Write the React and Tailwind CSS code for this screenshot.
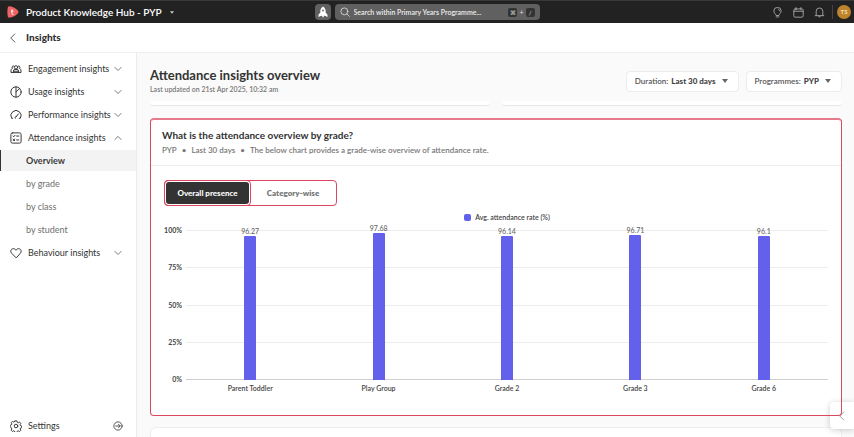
import React from "react";

const nav = [
  { label: "Engagement insights", icon: "people" },
  { label: "Usage insights", icon: "pie" },
  { label: "Performance insights", icon: "gauge" },
  { label: "Attendance insights", icon: "list", open: true, children: ["Overview", "by grade", "by class", "by student"] },
  { label: "Behaviour insights", icon: "heart" },
];

const grades = [
  { name: "Parent Toddler", value: 96.27 },
  { name: "Play Group", value: 97.68 },
  { name: "Grade 2", value: 96.14 },
  { name: "Grade 3", value: 96.71 },
  { name: "Grade 6", value: 96.1 },
];

const paths = {
  people: (
    <>
      <circle cx="8" cy="5.8" r="2.2" />
      <path d="M4.6 12.600v-1.800a2.200 2.200 0 0 1 2.200-2.200h2.400a2.200 2.200 0 0 1 2.200 2.200v1.800M5 4a1.700 1.700 0 0 0-1.500 3C2 7.600 1.300 9 1.300 10.600v2h13.400v-2c0-1.600-.7-3-2.200-3.600A1.700 1.700 0 0 0 11 4M4.600 11h6.800" />
    </>
  ),
  pie: (
    <>
      <circle cx="8" cy="8" r="6.9" />
      <path d="M8 1.2v13.6M8 8l4.8-4.9" />
    </>
  ),
  gauge: <path d="M3.600 12.400H2.200a6.800 6.800 0 1 1 11.600 0h-1.400M8.600 9.800l2.600-3.300M7 12.400a1.700 1.700 0 0 1 1.600-2.600" />,
  list: (
    <>
      <rect x="1.2" y="1.2" width="13.6" height="13.6" rx="2" />
      <path d="M4 5.4l1 1 1.7-2M8.8 5.4h3M4.2 9.4l2 2.2M6.2 9.4l-2 2.2M8.8 10.6h3" />
    </>
  ),
  heart: <path d="M8 14.2 2.3 8.5C-.2 5.8 1.3 2.2 4.5 2.2c1.7 0 2.8.9 3.5 2.1.7-1.2 1.8-2.1 3.5-2.1 3.2 0 4.7 3.6 2.2 6.3z" />,
  gear: (
    <>
      <path d="M6.8 1.2h2.4l.5 1.9 1.3.6 1.8-.9 1.6 1.700-.9 1.700.5 1.300 1.800.6v2l-1.800.6-.5 1.300.9 1.700-1.600 1.600-1.800-.9-1.300.6-.5 1.800H6.800l-.6-1.800-1.200-.6-1.800.9-1.600-1.600.9-1.700-.6-1.300L.3 9.100v-2l1.600-.6.6-1.300-.9-1.700 1.600-1.700 1.800.9 1.200-.6z" />
      <circle cx="8" cy="8" r="2.4" />
    </>
  ),
  exit: (
    <>
      <circle cx="8" cy="8" r="6.6" />
      <path d="M4.4 8h7M8.8 5.3 11.5 8l-2.7 2.7" />
    </>
  ),
  down: <path d="m1.800 4.800 6.200 6.200 6.200-6.200" />,
  up: <path d="m1.800 11 6.200-6.200 6.200 6.200" />,
  left: <path d="M10.800 1.600 4.400 8l6.400 6.400" />,
  search: (
    <>
      <circle cx="7" cy="7" r="5.6" />
      <path d="m11 11 4 4" />
    </>
  ),
  bulb: (
    <path d="M5.8 11.8C5.5 9.8 2.7 8.9 2.7 5.8a5.3 5.3 0 0 1 10.6 0c0 3.1-2.8 4-3.1 6zM6 14.4h4M9 3.2c1.4.3 2 1.200 2.100 2.400" />
  ),
  calendar: (
    <>
      <rect x="1.2" y="2.8" width="13.6" height="12" rx="2" />
      <path d="M1.2 6.2h13.6M4.5.8v3.4M11.5.8v3.4" />
    </>
  ),
  bell: <path d="M1.8 12.6h12.4M3.2 12.4V6.2a4.8 4.8 0 0 1 9.6 0v6.2M6.4 13.2a1.7 1.7 0 0 0 3.2 0" />,
};

function Icon({ name, className = "size-3" }) {
  return (
    <svg viewBox="0 0 16 16" className={`shrink-0 ${className}`} fill="none" stroke="currentColor" strokeWidth="1.3" strokeLinecap="round" strokeLinejoin="round" aria-hidden="true">
      {paths[name]}
    </svg>
  );
}

function Caret({ className = "h-1 w-1.5" }) {
  return (
    <svg viewBox="0 0 6 4" className={`shrink-0 ${className}`} fill="currentColor" aria-hidden="true">
      <path d="M0 0h6L3 4z" />
    </svg>
  );
}

function TopBar() {
  return (
    <header className="flex h-[23px] shrink-0 items-center border-t border-[#393939] bg-[#222] text-white">
      <div className="flex flex-1 items-center pl-[7px]">
        <svg viewBox="0 0 24 24" className="size-3" aria-hidden="true">
          <path d="M3 1C8-1 23 7 23 12S8 25 3 23C0 22 0 2 3 1z" fill="#ee6265" />
          <path d="M10 7v8c0 2 1 2 3 2M8 10h5" fill="none" stroke="#fff" strokeWidth="2" />
        </svg>
        <button type="button" className="flex items-center gap-2 pl-[7px] text-[10px] font-semibold">
          Product Knowledge Hub - PYP
          <Caret className="h-[3px] w-1 text-[#ccc]" />
        </button>
      </div>
      <button type="button" aria-label="Launch" className="mr-1 flex size-4 items-center justify-center rounded bg-[#606060]">
        <svg viewBox="0 0 16 16" className="size-3" fill="#fff" aria-hidden="true">
          <path d="M8 .5c3 2 4 4.700 3.500 8l2.500 3v3l-3.500-1.500H9.500L8 15.500 6.500 13h-1L2 14.500v-3l2.500-3C4 5.200 5 2.500 8 .5z" />
          <circle cx="8" cy="6" r="1.200" fill="#606060" />
        </svg>
      </button>
      <label className="mr-1 flex h-4 w-[205px] items-center rounded bg-[#606060] pr-[5px] pl-[5px]">
        <Icon name="search" className="size-2.5 text-[#ddd]" />
        <input
          type="text"
          aria-label="Search"
          placeholder="Search within Primary Years Programme..."
          className="min-w-0 flex-1 bg-transparent pl-1 text-[7px] font-semibold text-white outline-none placeholder:text-[#eee]"
        />
        <kbd className="flex h-[9px] w-[9px] items-center justify-center rounded-xs bg-[#333] font-[DejaVu_Sans] text-[6px] text-[#ddd]">⌘</kbd>
        <span className="px-0.5 text-[7px] text-[#ddd]">+</span>
        <kbd className="flex h-[9px] w-[9px] items-center justify-center rounded-xs bg-[#333] font-[Lato] text-[6px] text-[#ddd]">/</kbd>
      </label>
      <div className="flex flex-1 items-center justify-end pr-[3px] text-[#aaa]">
        <button type="button" aria-label="Tips"><Icon name="bulb" className="size-[11px]" /></button>
        <button type="button" aria-label="Calendar" className="ml-2.5"><Icon name="calendar" className="size-[11px]" /></button>
        <button type="button" aria-label="Notifications" className="ml-2.5"><Icon name="bell" className="size-[11px]" /></button>
        <span className="ml-[7px] h-3.5 w-px bg-[#444]" />
        <button type="button" className="ml-1 size-3.5 rounded-full bg-[#bd842c] text-center text-[6px] leading-[14px] font-bold text-[#f3dfba]">TS</button>
      </div>
    </header>
  );
}

function Sidebar() {
  return (
    <nav className="flex w-[137px] shrink-0 flex-col border-r border-[#ececec] bg-white pt-1 text-[9px] text-[#333]">
      {nav.map((item) => (
        <div key={item.label}>
          <button type="button" className="flex h-[23px] w-full items-center pr-3.5 pl-2.5">
            <Icon name={item.icon} />
            <span className="flex-1 pl-1.5 text-left whitespace-nowrap">{item.label}</span>
            <Icon name={item.open ? "up" : "down"} className="size-2" />
          </button>
          {item.children?.map((child, i) => (
            <a
              key={child}
              href="#"
              className={
                i === 0
                  ? "my-px flex h-[21px] items-center border-l border-[#333] bg-[#f3f3f3] pl-[25px] text-[9px] font-bold text-[#3a3a3a]"
                  : "flex h-[23px] items-center pl-[26px] text-[#707070]"
              }
            >
              {child}
            </a>
          ))}
        </div>
      ))}
      <button type="button" className="mt-auto flex h-[23px] w-full items-center pr-[13px] pl-2.5">
        <Icon name="gear" />
        <span className="flex-1 pl-1.5 text-left">Settings</span>
        <Icon name="exit" className="size-2.5" />
      </button>
    </nav>
  );
}

function Filter({ label, value }) {
  return (
    <button type="button" className="flex h-[21px] items-center rounded border border-[#ececec] bg-white px-2 text-[8px] font-semibold text-[#555]">
      {label}:<span className="pl-[3px] font-black text-[#444]">{value}</span>
      <Caret className="mr-0.5 ml-1.5 h-1 w-1.5 text-[#666]" />
    </button>
  );
}

function Chart() {
  return (
    <div className="pr-3.5 pl-3 pt-1.5 text-[#444]">
      <div className="flex h-[11px] items-center justify-center gap-1 pl-6 text-[7px] font-semibold">
        <span className="size-[7px] rounded-xs bg-[#6361ec]" />
        Avg. attendance rate (%)
      </div>
      <div className="flex gap-1 pt-[7px]">
        <div className="-my-1 flex w-5 flex-col justify-between text-right text-[7px] leading-[9px] font-bold">
          {["100%", "75%", "50%", "25%", "0%"].map((tick) => (
            <span key={tick}>{tick}</span>
          ))}
        </div>
        <div className="relative h-[150px] flex-1">
          <div className="absolute inset-0 flex flex-col justify-between">
            <i className="h-px bg-[#ececec]" />
            <i className="h-px bg-[#ececec]" />
            <i className="h-px bg-[#ececec]" />
            <i className="h-px bg-[#ececec]" />
            <i className="h-px bg-[#cfcfcf]" />
          </div>
          <div className="relative grid h-full grid-cols-5">
            {grades.map((grade) => (
              <div key={grade.name} className="flex flex-col items-center justify-end">
                <span className="text-[7px] leading-[9px] font-medium text-[#666]">{grade.value}</span>
                <div className="w-3 shrink-0 rounded-t-[1px] bg-[#6361ec]" style={{ height: `${grade.value}%` }} />
              </div>
            ))}
          </div>
        </div>
      </div>
      <div className="grid grid-cols-5 pt-1 pl-6 text-center text-[7px] leading-[9px] font-semibold">
        {grades.map((grade) => (
          <span key={grade.name}>{grade.name}</span>
        ))}
      </div>
    </div>
  );
}

export default function App() {
  return (
    <div className="relative flex h-screen flex-col overflow-hidden bg-white font-[Lato,'Open_Sans',sans-serif]">
      <TopBar />
      <div className="flex h-[30px] shrink-0 items-center gap-2 border-b border-[#efefef] pl-2 text-[#333]">
        <button type="button" aria-label="Back"><Icon name="left" className="size-2.5" /></button>
        <h1 className="text-[10px] font-black">Insights</h1>
      </div>
      <div className="flex min-h-0 flex-1">
        <Sidebar />
        <main className="min-w-0 flex-1 overflow-hidden bg-[#fafafa] pr-3 pl-[13px]">
          <div className="flex h-12 items-center justify-between pt-2">
            <div>
              <h2 className="text-[13px] leading-[16px] font-bold text-[#333]">Attendance insights overview</h2>
              <p className="text-[7px] leading-[12px] font-semibold text-[#777]">Last updated on 21st Apr 2025, 10:32 am</p>
            </div>
            <div className="flex gap-[7px]">
              <Filter label="Duration" value="Last 30 days" />
              <Filter label="Programmes" value="PYP" />
            </div>
          </div>
          <div className="grid h-[5px] grid-cols-2 gap-3">
            <div className="rounded-b border-b border-[#e8e8e8] bg-white" />
            <div className="rounded-b border-b border-[#e8e8e8] bg-white" />
          </div>
          <section className="relative mt-3 rounded bg-white pb-[23px]">
            <div className="pointer-events-none absolute inset-0 z-20 rounded border border-t-2 border-[#dc4661] border-t-[#e57a8d]" />
            <div className="border-b border-[#ececec] px-3 pt-2.5 pb-[7px]">
              <h3 className="text-[10px] leading-[14px] font-bold text-[#333]">What is the attendance overview by grade?</h3>
              <p className="flex gap-[5px] text-[8px] leading-[16px] font-semibold text-[#777]">
                <span>PYP</span>
                <span>•</span>
                <span>Last 30 days</span>
                <span>•</span>
                <span>The below chart provides a grade-wise overview of attendance rate.</span>
              </p>
            </div>
            <div className="px-3.5 pt-3.5">
              <div className="flex h-[26px] w-[173px] rounded border border-[#dc4661] text-[8px]">
                <button type="button" className="-m-px w-[87px] rounded border border-[#dc4661] p-px font-black">
                  <span className="flex h-full items-center justify-center rounded-[3px] bg-[#333] text-white">Overall presence</span>
                </button>
                <button type="button" className="flex-1 font-extrabold text-[#777]">Category-wise</button>
              </div>
            </div>
            <Chart />
          </section>
          <div className="mt-[11px] h-20 rounded-md border border-[#eee] bg-white" />
        </main>
      </div>
      <button type="button" aria-label="Open panel" className="absolute right-0 bottom-2 z-10 flex h-[27px] w-6 items-center justify-center rounded-l bg-white text-[#888] shadow-[0_1px_6px_rgba(0,0,0,0.2)]">
        <Icon name="left" className="size-2.5" />
      </button>
    </div>
  );
}
